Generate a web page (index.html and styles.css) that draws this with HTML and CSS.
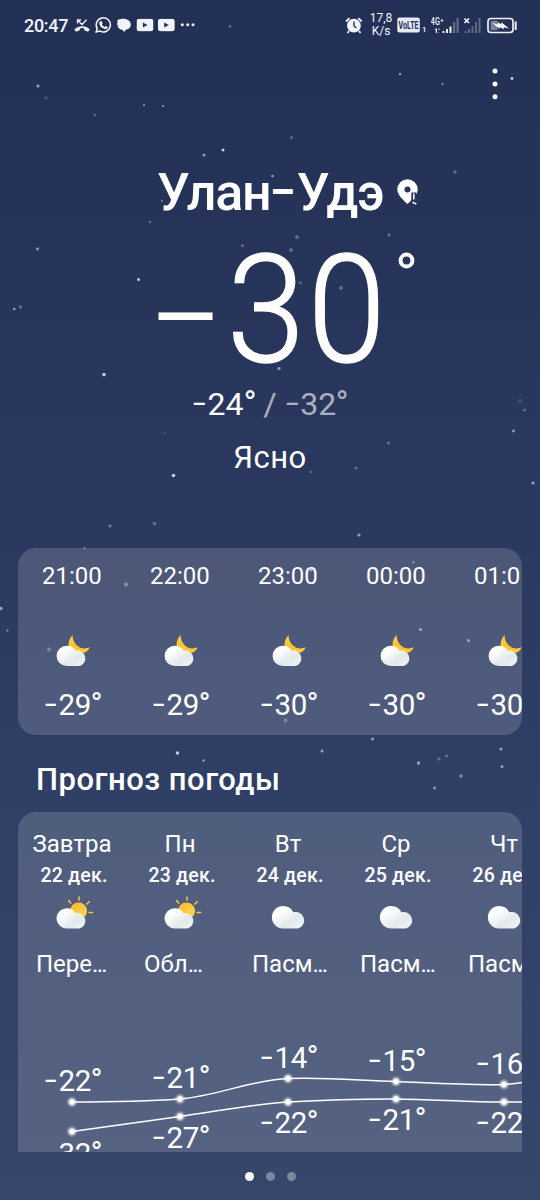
FILE: index.html
```
<!DOCTYPE html>
<html lang="ru">
<head>
<meta charset="utf-8">
<title>Погода</title>
<link rel="stylesheet" href="styles.css">
</head>
<body>
<svg class="defs" width="0" height="0" aria-hidden="true">
  <defs>
    <linearGradient id="cloudFill" x1="0" y1="0" x2="1" y2="1"><stop offset=".25" stop-color="#fff"/><stop offset=".65" stop-color="#e2e8eb"/><stop offset="1" stop-color="#f4f8fa"/></linearGradient>
    <linearGradient id="sunFill" x1="0" y1="0" x2="1" y2="1"><stop offset="0" stop-color="#ffb52e"/><stop offset="1" stop-color="#ffdc55"/></linearGradient>
    <radialGradient id="glow"><stop offset=".4" stop-color="#fff"/><stop offset=".6" stop-color="#fff" stop-opacity=".4"/><stop offset="1" stop-color="#fff" stop-opacity="0"/></radialGradient>
    <symbol id="night" viewBox="0 0 37 36">
      <path d="M18.600 3C12.500 9 13 21 23 21.600C29 22 34.500 20 35.600 15C28 19.500 18.500 13 18.600 3Z" fill="#ffc734"/>
      <path d="M12.700 13.700a10.200 10.200 0 0 1 8.900 5.100a7.700 7.700 0 1 1 3.800 15.200H12.700a10.150 10.150 0 0 1 0-20.300Z" fill="url(#cloudFill)"/>
    </symbol>
    <symbol id="partly" viewBox="0 0 40 36">
      <circle cx="24.500" cy="17" r="8.500" fill="url(#sunFill)"/>
      <path d="M25 3v3M14.700 6.500l2 2.600M35.200 7.700l-2.300 2.400M35 18.500h3.600" stroke="#ffc83c" stroke-width="1.500" stroke-linecap="round"/>
      <path d="M12.700 14.200a10.200 10.200 0 0 1 8.900 5.100a7.700 7.700 0 1 1 3.800 15.300H12.700a10.200 10.200 0 0 1 0-20.400Z" fill="url(#cloudFill)"/>
    </symbol>
    <symbol id="cloudy" viewBox="0 0 40 36">
      <path d="M13.200 12a11.500 11.500 0 0 1 10.200 6.200a8.300 8.300 0 1 1 4.500 16.400H13.200a11.300 11.300 0 0 1 0-22.600Z" fill="url(#cloudFill)"/>
    </symbol>
    <symbol id="tube" viewBox="0 0 17 13"><rect width="17" height="12.500" rx="3"/><path d="M6.400 3.700v5l4.600-2.500Z" fill="#243156"/></symbol>
  </defs>
</svg>

<main class="screen">
  <svg class="stars" viewBox="0 0 540 1200" aria-hidden="true">
    <g fill="#c9d6f5">
      <g opacity=".95"><circle cx="138.500" cy="279.500" r="1.500"/><circle cx="104" cy="374.500" r="1.800"/><circle cx="173.500" cy="475.500" r="1.800"/><circle cx="223" cy="150" r="1.500"/><circle cx="512" cy="78.500" r="1.400"/><circle cx="177.500" cy="753" r="1.700"/></g>
      <g opacity=".65"><circle cx="38" cy="86" r="1.600"/><circle cx="163" cy="106" r="1.100"/><circle cx="144" cy="105" r="1"/><circle cx="400" cy="74" r="1.200"/><circle cx="442.500" cy="84" r="1.100"/><circle cx="37.500" cy="249" r="1.400"/><circle cx="14.300" cy="309" r="1.300"/><circle cx="279" cy="368.500" r="1.600"/><circle cx="513.500" cy="431" r="1.400"/><circle cx="533" cy="483" r="1.600"/><circle cx="359" cy="535" r="1.600"/><circle cx="110" cy="526" r="1.600" opacity=".7"/><circle cx="204" cy="155" r="1.500"/><circle cx="272.500" cy="176" r="1.300"/><circle cx="1" cy="608.500" r="1.700"/><circle cx="7.500" cy="630.500" r="1"/><circle cx="203.500" cy="760.500" r="1.200"/><circle cx="372.500" cy="739" r="1.500"/><circle cx="322" cy="751" r="1.500"/><circle cx="418.500" cy="763" r="1.700"/><circle cx="501" cy="749" r="1.600"/><circle cx="502" cy="766.500" r="1.500"/><circle cx="434.500" cy="788" r="1.400"/><circle cx="461" cy="776" r="1.900" opacity=".7"/><circle cx="126" cy="584.500" r="2" opacity=".7"/><circle cx="420.500" cy="629.500" r="1.600"/><circle cx="468.500" cy="640.500" r="1.500"/><circle cx="311" cy="569.500" r="2"/></g>
      <g opacity=".35"><circle cx="230" cy="26.500" r="1.400"/><circle cx="46" cy="98" r="1.700" opacity=".6"/><circle cx="95" cy="115" r="1.300"/><circle cx="291.500" cy="137.500" r="1.500"/><circle cx="455" cy="172" r="1.700"/><circle cx="150" cy="222" r="1.300"/><circle cx="162" cy="201" r="1.200"/><circle cx="297" cy="237" r="2"/><circle cx="291" cy="250" r="1.900"/><circle cx="242.500" cy="245.500" r="1.600"/><circle cx="389" cy="235" r="1.700"/><circle cx="300.500" cy="283" r="1.400"/><circle cx="341" cy="288" r="2"/><circle cx="20.500" cy="307" r="1.700"/><circle cx="524.500" cy="410" r="1.500"/><circle cx="520" cy="401" r="2" opacity=".5"/><circle cx="388.500" cy="443" r="1.600"/><circle cx="356" cy="468" r="1.600"/><circle cx="311" cy="472" r="1.200"/><circle cx="165" cy="433" r="1.500" opacity=".4"/><circle cx="154.500" cy="523.500" r="1.800"/><circle cx="84.500" cy="548" r="1.300"/><circle cx="439" cy="759" r="1.600"/><circle cx="446.500" cy="756" r="1.600"/><circle cx="49" cy="649.500" r="2"/><circle cx="413.500" cy="562" r="1.500"/><circle cx="285.500" cy="720.500" r="1.900"/></g>
    </g>
  </svg>

  <header class="status">
    <span class="clock">20:47</span>
    <svg class="notif" width="122" height="20" viewBox="74 15 122 20" fill="#f1f4fc">
      <path d="M74.300 29.500c4.500-4.300 11.300-4.300 15.500 0l-1.800 2.300-3.700-1.600v-1.700q-2.200-.8-4.500 0v1.700l-3.800 1.600Z"/>
      <path d="M77.500 23.500v-3.500h3.500M78 20.500l4 4 4.500-4.800" fill="none" stroke="#f1f4fc" stroke-width="1.300"/>
      <path d="M96.200 32l1-3.500a7.100 7.100 0 1 1 2.700 2.600Z" fill="none" stroke="#f1f4fc" stroke-width="1.500"/>
      <path d="M99.900 21.500l1.300-.8 1.400 2.500-.7 1.200q1 1.900 2.700 2.500l1.100-.9 2.300 1.300q-1 2.200-3.200 1.800-5.300-1.500-5.600-6.300Z"/>
      <path d="M117 20.500q2-1.800 6-1.700c4.800 0 7.800 2.400 7.800 5.800 0 3-2.300 5-5.300 5.300l-1.300 2.400-1.400-2.200c-3-.4-5.300-2.100-5.300-4.800q-1-2 .2-3.500Z"/>
      <use href="#tube" x="136.500" y="18.700" width="17" height="13"/><use href="#tube" x="157.800" y="18.700" width="17" height="13"/>
      <circle cx="182.300" cy="24.700" r="1.500"/><circle cx="187.700" cy="24.700" r="1.500"/><circle cx="193" cy="24.700" r="1.500"/>
    </svg>
    <svg class="alarm" width="17" height="17" viewBox="345 16 17 17" fill="#f1f4fc"><circle cx="353.900" cy="24.700" r="6.900"/><path d="M346 20.500l3.500-3.300M361.800 20.500l-3.500-3.300M349 30l-1.500 2M359 30l1.500 2" stroke="#f1f4fc" stroke-width="1.800"/><path d="M354 20.500v4.500l2.500 2" fill="none" stroke="#243156" stroke-width="1.400"/></svg>
    <span class="speed">17,8<br>K/s</span>
    <svg class="volte" width="24" height="16" viewBox="0 0 24 16"><rect x=".3" y=".5" width="22.500" height="15" rx="2" fill="#e6e9f3"/><text x="1.600" y="11.700" textLength="20" lengthAdjust="spacingAndGlyphs" fill="#243156">VoLTE</text></svg><span class="sim">1</span>
    <svg class="signal" width="28" height="18" viewBox="431 15 28 18" fill="#f1f4fc">
      <text class="net" x="430.800" y="23.500" textLength="9" lengthAdjust="spacingAndGlyphs">4G</text><text class="plus" x="440.200" y="21">+</text><path d="M434.500 28.500l1.500-1h1v4.500h-1.200v-3M438.500 27.500h1v1.500h-1M442.500 30h2v2h-2ZM446 28h2v4h-2ZM449.500 25.500h2v6.500h-2Z"/><path d="M438 31h1.500v1H438ZM453 21h2.200v11H453ZM456.500 17h2.200v15h-2.200Z" opacity=".3"/>
    </svg>
    <svg class="nosignal" width="18" height="18" viewBox="463 15 18 18"><path d="M464.500 17.500l4.500 4.500M469 17.500l-4.500 4.500" stroke="#fff" stroke-width="1.600"/><path d="M464.500 30h2v2h-2ZM468 28h2v4h-2ZM471.500 25h2v7h-2ZM475 21h2v11h-2ZM478.500 17h2v15h-2Z" fill="#fff" opacity=".28"/></svg>
    <svg class="battery" width="31" height="17" viewBox="487 16 31 17"><rect x="488" y="17.500" width="25" height="14" rx="3" fill="none" stroke="#eef1fa" stroke-width="1.700"/><rect x="490.500" y="19.800" width="7" height="9.500" rx="1" fill="#fff" opacity=".4"/><path d="M515.700 20.500v8.500" stroke="#eef1fa" stroke-width="2"/><path d="M492.500 22l5.500 1.500-.5-2.500 4 2.500-.5-2.500 8 6.500-5.500-1.200.5 2-4.500-2.300.2 2Z" fill="#fff"/></svg>
  </header>

  <nav class="menu"><svg width="6" height="34" viewBox="0 0 6 34" fill="#fff"><circle cx="3" cy="4" r="2.500"/><circle cx="3" cy="17" r="2.500"/><circle cx="3" cy="29.700" r="2.500"/></svg></nav>

  <section class="hero">
    <h1 class="city"><span class="cityname">Улан<span class="dash">–</span>Удэ</span>
      <svg class="pin" width="22" height="28" viewBox="397 179 22 28"><path d="M407.500 179.300a10.200 10.200 0 0 1 10.200 10.200c0 5-5.200 9.500-10.200 14.500-4.500-4-10.200-9.500-10.200-14.500a10.200 10.200 0 0 1 10.200-10.200Z" fill="#fff"/><circle cx="407.500" cy="189.500" r="3" fill="#26345b"/><path d="M411.300 192.500h5v11h-3.200l-1.800-3Z" fill="#26345b"/><path d="M413.800 193.500v6" stroke="#fff" stroke-width="1.500"/><path d="M412.500 202.300l3.800 1.800" stroke="#fff" stroke-width="1.700"/></svg>
    </h1>
    <div class="now"><span class="minus">–</span><span class="nowdigits">30</span><svg class="ring" width="17" height="17"><circle cx="8.500" cy="8.500" r="5.900" fill="none" stroke="#fff" stroke-width="4"/></svg></div>
    <div class="range"><span class="dash">–</span>24<span class="o">°</span> <span class="low">/ <span class="dash">–</span>32<span class="o">°</span></span></div>
    <div class="condition">Ясно</div>
  </section>

  <section class="card hourly">
    <div class="hour"><time>21:00</time><svg class="icon"><use href="#night" width="37" height="36"/></svg><span class="deg"><span class="dash">–</span>29<span class="o">°</span></span></div>
    <div class="hour"><time>22:00</time><svg class="icon"><use href="#night" width="37" height="36"/></svg><span class="deg"><span class="dash">–</span>29<span class="o">°</span></span></div>
    <div class="hour"><time>23:00</time><svg class="icon"><use href="#night" width="37" height="36"/></svg><span class="deg"><span class="dash">–</span>30<span class="o">°</span></span></div>
    <div class="hour"><time>00:00</time><svg class="icon"><use href="#night" width="37" height="36"/></svg><span class="deg"><span class="dash">–</span>30<span class="o">°</span></span></div>
    <div class="hour"><time>01:0</time><svg class="icon"><use href="#night" width="37" height="36"/></svg><span class="deg"><span class="dash">–</span>30</span></div>
  </section>

  <h2 class="title">Прогноз погоды</h2>

  <section class="card daily">
    <div class="days">
      <div class="day"><span class="name">Завтра</span><span class="date">22 дек.</span><svg class="icon"><use href="#partly" width="40" height="36"/></svg><span class="desc">Пере<span class="dots">...</span></span></div>
      <div class="day"><span class="name">Пн</span><span class="date">23 дек.</span><svg class="icon"><use href="#partly" width="40" height="36"/></svg><span class="desc">Обл<span class="dots">...</span></span></div>
      <div class="day"><span class="name">Вт</span><span class="date">24 дек.</span><svg class="icon"><use href="#cloudy" width="40" height="36"/></svg><span class="desc">Пасм<span class="dots">...</span></span></div>
      <div class="day"><span class="name">Ср</span><span class="date">25 дек.</span><svg class="icon"><use href="#cloudy" width="40" height="36"/></svg><span class="desc">Пасм<span class="dots">...</span></span></div>
      <div class="day"><span class="name">Чт</span><span class="date">26 дек.</span><svg class="icon"><use href="#cloudy" width="40" height="36"/></svg><span class="desc">Пасм<span class="dots">...</span></span></div>
    </div>
    <div class="chart">
      <svg class="lines" width="504" height="152" viewBox="18 1000 504 152">
        <g fill="none" stroke="#fff" stroke-width="1.500">
          <path d="M72 1102C110 1102 145 1101.500 180 1099C217 1096 251 1080 288 1078.500C325 1077 360 1080.500 396 1081.500C432 1083 468 1085.500 504 1084.500Q513 1084 522 1082.500"/>
          <path d="M72 1131.500L180 1116.500C216 1111.500 252 1104 288 1102C324 1100 360 1098.800 396 1099C432 1099.300 468 1102 504 1102H522"/>
        </g>
        <g fill="url(#glow)"><circle cx="72" cy="1102" r="6"/><circle cx="180" cy="1099" r="6"/><circle cx="288" cy="1078.500" r="6"/><circle cx="396" cy="1081.500" r="6"/><circle cx="504" cy="1084.500" r="6"/><circle cx="72" cy="1131.500" r="6"/><circle cx="180" cy="1116.500" r="6"/><circle cx="288" cy="1102" r="6"/><circle cx="396" cy="1099" r="6"/><circle cx="504" cy="1102" r="6"/></g>
      </svg>
      <div class="labels">
        <div class="pair"><span class="deg" style="top:63px"><span class="dash">–</span>22<span class="o">°</span></span><span class="deg" style="top:135.5px"><span class="dash">–</span>32<span class="o">°</span></span></div>
        <div class="pair"><span class="deg" style="top:60px"><span class="dash">–</span>21<span class="o">°</span></span><span class="deg" style="top:120px"><span class="dash">–</span>27<span class="o">°</span></span></div>
        <div class="pair"><span class="deg" style="top:40px"><span class="dash">–</span>14<span class="o">°</span></span><span class="deg" style="top:105px"><span class="dash">–</span>22<span class="o">°</span></span></div>
        <div class="pair"><span class="deg" style="top:43px"><span class="dash">–</span>15<span class="o">°</span></span><span class="deg" style="top:102px"><span class="dash">–</span>21<span class="o">°</span></span></div>
        <div class="pair"><span class="deg" style="top:46px"><span class="dash">–</span>16<span class="o">°</span></span><span class="deg" style="top:105px"><span class="dash">–</span>22<span class="o">°</span></span></div>
      </div>
    </div>
  </section>

  <footer class="pager"><i class="dot on"></i><i class="dot"></i><i class="dot"></i></footer>
</main>
</body>
</html>
```
FILE: styles.css
```
* { box-sizing: border-box; }
body { margin: 0; font-family: Roboto, "Liberation Sans", sans-serif; color: #fff; }
.defs { position: absolute; }
.screen { position: relative; width: 540px; height: 1200px; overflow: hidden; display: flex; flex-direction: column; background: linear-gradient(#233055, #2b385f 42%, #304067 70%, #37466b); }
.stars { position: absolute; inset: 0; pointer-events: none; z-index: 1; }

.status { display: flex; align-items: center; height: 50px; padding-left: 24px; flex: none; color: #f1f4fc; }
.clock { width: 50px; font-size: 18px; font-weight: 500; letter-spacing: -.3px; }
.alarm { margin-left: 149px; }
.speed { width: 28px; margin: 0 2px 0 5px; font-size: 12px; line-height: 13px; text-align: center; }
.volte { font-size: 10px; font-weight: 700; }
.sim { width: 10px; font-size: 8px; padding: 8px 0 0 1px; font-weight: 500; }
.net { font-size: 10px; font-weight: 500; }
.plus { font-size: 6px; font-weight: 700; }
.nosignal { margin-left: 4px; }
.battery { margin-left: 6px; }

.menu { height: 78px; padding: 17px 42px 0 0; text-align: right; flex: none; }
.hero { display: flex; flex-direction: column; align-items: center; height: 419.5px; flex: none; }
.dash { display: inline-block; width: .49em; transform: scaleX(.7); transform-origin: left; }
.city { display: flex; align-items: center; align-self: flex-start; gap: 16px; margin: 35px 0 0 157px; height: 60px; font-size: 52px; line-height: 60px; font-weight: 500; }
.cityname { width: 224px; flex: none; white-space: nowrap; letter-spacing: -1.3px; }
.city .dash { width: .51em; transform: scaleX(.76); }
.now { display: flex; align-self: flex-start; height: 160px; margin: 8px 0 0 150px; line-height: 160px; font-size: 151px; font-weight: 300; }
.minus { width: 77px; flex: none; transform: translateY(8px) scaleX(.73); transform-origin: left; }
.nowdigits { width: 162px; flex: none; letter-spacing: 3px; -webkit-text-stroke: 1.5px #fff; transform: scaleX(.93); transform-origin: left; }
.ring { flex: none; margin: 21px 0 0 9px; }
.range { height: 28px; line-height: 28px; font-size: 32px; white-space: nowrap; margin-top: -1px; }
.o { display: inline-block; transform: translateY(-1px) scale(1.1); transform-origin: 50% 30%; }
.low { opacity: .6; }
.condition { margin-top: 20px; height: 40px; line-height: 40px; font-size: 31px; letter-spacing: .5px; }

.card { width: 504px; margin: 0 18px; background: rgba(255, 255, 255, .155); overflow: hidden; flex: none; }
.hourly { display: grid; grid-template-columns: repeat(5, 108px); height: 187px; border-radius: 18px; }
.hour { display: flex; flex-direction: column; align-items: center; padding-top: 12.5px; }
.hour time { width: 60px; height: 32px; line-height: 32px; font-size: 24px; }
.icon { width: 40px; height: 36px; margin: 40px 0 0 4px; }
.deg { width: 56px; line-height: 36px; font-size: 29.5px; letter-spacing: -.3px; white-space: nowrap; }
.hour .deg { margin-top: 19px; }
.title { margin: 25.500px 0 0 36px; height: 40px; line-height: 40px; font-size: 31px; font-weight: 500; letter-spacing: .5px; }

.daily { height: 340px; margin-top: 12px; border-radius: 18px 18px 0 0; }
.days { display: grid; grid-template-columns: repeat(5, 108px); height: 188px; }
.day { display: flex; flex-direction: column; align-items: center; padding-top: 16px; }
.name { line-height: 32px; font-size: 24px; }
.date { margin-left: 4px; line-height: 32px; font-size: 19.5px; font-weight: 500; letter-spacing: .2px; }
.day .icon { margin-top: 2px; }
.desc { align-self: flex-start; margin: 18px 0 0 18px; line-height: 32px; font-size: 24px; }
.dots { letter-spacing: -1.7px; }
.chart { position: relative; height: 152px; }
.lines { display: block; }
.labels { position: absolute; inset: 0; display: grid; grid-template-columns: repeat(5, 108px); }
.pair { position: relative; }
.pair .deg { position: absolute; left: 26px; }
.pager { display: flex; justify-content: center; gap: 12px; padding-top: 20px; }
.dot { width: 9px; height: 9px; border-radius: 50%; background: rgba(255, 255, 255, .35); }
.dot.on { background: #fff; }
```
